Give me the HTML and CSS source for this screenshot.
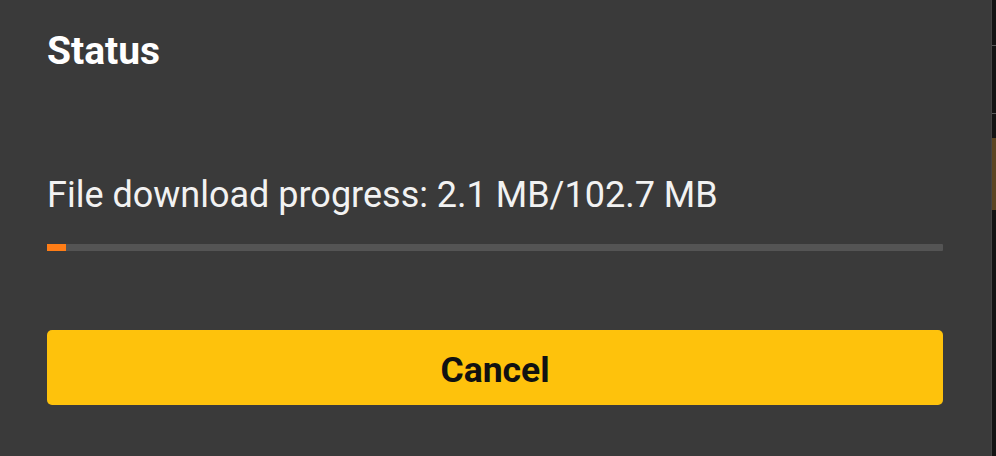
FILE: index.html
```html
<!DOCTYPE html>
<html>
<head>
<meta charset="utf-8">
<link rel="stylesheet" href="styles.css">
</head>
<body>
<div class="screen">
  <div class="dialog">
    <h1 class="title">Status</h1>
    <p class="label">File download progress: 2.1 MB/102.7 MB</p>
    <div class="track"><div class="fill" style="width:2.1%"></div></div>
    <button class="cancel">Cancel</button>
  </div>
  <div class="edge">
    <div class="edge-top"></div>
    <div class="edge-line"></div>
    <div class="edge-mid"></div>
    <div class="edge-line"></div>
    <div class="edge-gap"></div>
    <div class="edge-brown"></div>
    <div class="edge-rest"></div>
  </div>
</div>
</body>
</html>
```
FILE: styles.css
```css
html, body {
  margin: 0;
  padding: 0;
  background: #3a3a3a;
}
.screen {
  display: flex;
  width: 996px;
  height: 456px;
  overflow: hidden;
}
.dialog {
  flex: 1;
  display: flex;
  flex-direction: column;
  padding: 0 48px 0 47px;
  background: #3a3a3a;
  border-right: 1px solid #444;
  font-family: Roboto, "Noto Sans", sans-serif;
}
.title {
  margin: 28px 0 0 0;
  font-size: 39px;
  line-height: 46px;
  font-weight: 700;
  color: #ffffff;
}
.label {
  margin: 99px 0 0 0;
  font-size: 36px;
  line-height: 44px;
  font-weight: 400;
  color: #f2f2f2;
}
.track {
  margin-top: 27px;
  height: 7px;
  background: #545454;
  border-radius: 1px;
}
.fill {
  height: 100%;
  background: #ff7d16;
}
.cancel {
  margin-top: 79px;
  height: 75px;
  border: none;
  border-radius: 5px;
  background: #fec20c;
  color: #111;
  font-family: Roboto, "Noto Sans", sans-serif;
  font-size: 35.5px;
  font-weight: 700;
  padding: 4px 0 0 0;
}
.edge {
  width: 4px;
  display: flex;
  flex-direction: column;
  background: #141414;
}
.edge-top { height: 45px; }
.edge-line { height: 1px; background: #5a5a5a; }
.edge-mid { height: 67px; }
.edge-gap { height: 24px; }
.edge-brown { height: 72px; background: #5b4522; }
.edge-rest { flex: 1; }
```
